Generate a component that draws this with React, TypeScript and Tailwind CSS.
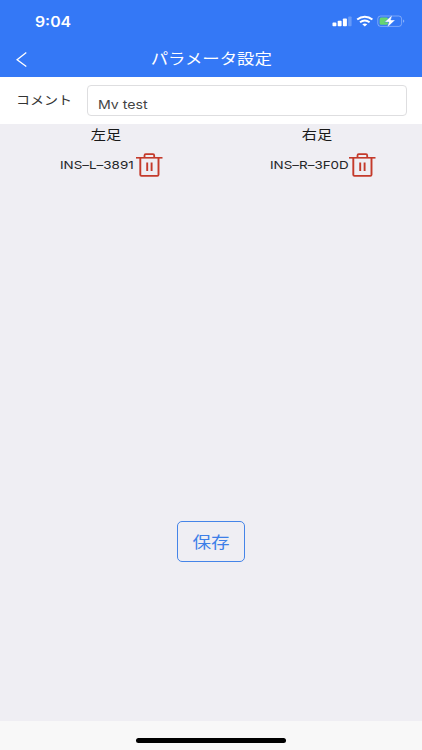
import React from "react";

function Wide({ children, className }: { children: React.ReactNode; className: string }) {
  return <span className={`inline-block whitespace-nowrap ${className}`}>{children}</span>;
}

function StatusIcons() {
  return (
    <svg width="74" height="14" viewBox="0 0 74 14" fill="none">
      <g fill="#fff">
        <rect x="0.5" y="8.6" width="3.9" height="3.7" rx="0.8" />
        <rect x="5.7" y="6.7" width="3.9" height="5.6" rx="0.8" />
        <rect x="10.9" y="4.4" width="4" height="7.9" rx="0.8" />
        <rect x="16.2" y="2.4" width="3.4" height="9.9" rx="0.8" opacity="0.25" />
      </g>
      <g stroke="#fff" strokeWidth="2">
        <path d="M25.2 5.6C29.6 1.9 36 1.9 40.4 5.6" />
        <path d="M28 8.3c2.9-2.2 6.7-2.2 9.6 0" />
      </g>
      <path d="M30.3 10.2c1.5-1 3.5-1 5 0l-2.5 2.2z" fill="#fff" />
      <rect x="45.8" y="2" width="23.8" height="10.4" rx="2.8" stroke="#fff" strokeOpacity="0.35" />
      <rect x="47.6" y="3.6" width="8.6" height="7.2" rx="1.5" fill="#67d56f" />
      <path d="M71.2 5.6c1.4.6 1.4 2.6 0 3.2z" fill="#fff" opacity="0.5" />
      <path d="M60.3 1 52.6 8.1h4.3l-1.7 5.4 8-7.5h-4.4z" fill="#fff" stroke="#3478f6" strokeWidth="0.4" />
    </svg>
  );
}

function Trash() {
  return (
    <svg width="27" height="24" viewBox="0 0 27 24" fill="none" stroke="#c43a2b" strokeWidth="1.9" strokeLinejoin="round">
      <path d="M0 4.8H26.5" strokeWidth="1.6" />
      <path d="M8.5 4.5V2.4Q8.5 1.2 9.7 1.2H17Q18.2 1.2 18.2 2.4V4.5" strokeWidth="1.8" />
      <path d="M4.3 5V21.7Q4.3 22.9 5.5 22.9H21.3Q22.5 22.9 22.5 21.7V5" />
      <path d="M11.2 9.6V17.9M15.6 9.6V17.9" strokeWidth="1.9" />
    </svg>
  );
}

function Foot({ side, id, idClass }: { side: string; id: string; idClass: string }) {
  return (
    <section className="flex w-1/2 flex-col items-center">
      <h2 className="flex h-[20px] items-center pl-px text-[13px] leading-5 text-[#181818]">
        <Wide className="scale-x-[1.17]">{side}</Wide>
      </h2>
      <div className="mt-[9px] flex h-6 items-center pl-[12px]">
        <div className={`font-['Inter'] text-[11px] text-[#252527] ${idClass}`}>
          <Wide className="origin-left scale-x-[1.22]">{id}</Wide>
        </div>
        <button aria-label="削除" className="block w-[27px]"><Trash /></button>
      </div>
    </section>
  );
}

export default function App() {
  return (
    <div className="flex h-[750px] w-[422px] flex-col overflow-hidden bg-[#efeef3] font-['Noto_Sans_CJK_JP',sans-serif]">
      <header className="flex h-[77px] shrink-0 flex-col bg-[#3478f6] text-white">
        <div className="flex h-[42px] items-center justify-between pl-[35px] pr-[16px]">
          <Wide className="origin-left scale-x-[1.13] font-['Inter'] text-[14px] font-semibold">9:04</Wide>
          <StatusIcons />
        </div>
        <div className="grid h-[35px] grid-cols-[50px_1fr_50px] items-center">
          <svg className="ml-4" width="12" height="16" viewBox="0 0 12 16" fill="none" stroke="#fff" strokeWidth="1.3">
            <path d="M10.3 0.6 1.1 7.7 10.3 14.6" />
          </svg>
          <h1 className="pb-[3px] text-center text-[15px] leading-5"><Wide className="scale-x-[1.16]">パラメータ設定</Wide></h1>
        </div>
      </header>
      <div className="flex h-[47px] shrink-0 items-center bg-white pl-4">
        <label className="w-[71px] pb-[2px] text-[12px] text-[#333]">
          <Wide className="origin-left scale-x-[1.17]">コメント</Wide>
        </label>
        <div className="flex h-[31px] w-[320px] items-center rounded-[4px] border border-[#dedee0] pl-[10px] pt-[8px] font-['Inter'] text-[12px] text-[#444]">
          <Wide className="origin-left scale-x-[1.18]">Mv test</Wide>
        </div>
      </div>
      <main className="flex flex-1 flex-col">
        <div className="flex">
          <Foot side="左足" id="INS–L–3891" idClass="w-[76px]" />
          <Foot side="右足" id="INS–R–3F0D" idClass="w-[79px]" />
        </div>
        <button className="mx-auto mt-[344px] flex h-[41px] w-[68px] items-center justify-center rounded-[5px] border border-[#4584e8] pb-[2px] text-[16px] text-[#3d7fe8]">
          <Wide className="scale-x-[1.16]">保存</Wide>
        </button>
      </main>
      <footer className="flex h-[29px] shrink-0 justify-center bg-[#f8f8f8] pt-[17px]">
        <div className="h-[5px] w-[150px] rounded-full bg-black" />
      </footer>
    </div>
  );
}
